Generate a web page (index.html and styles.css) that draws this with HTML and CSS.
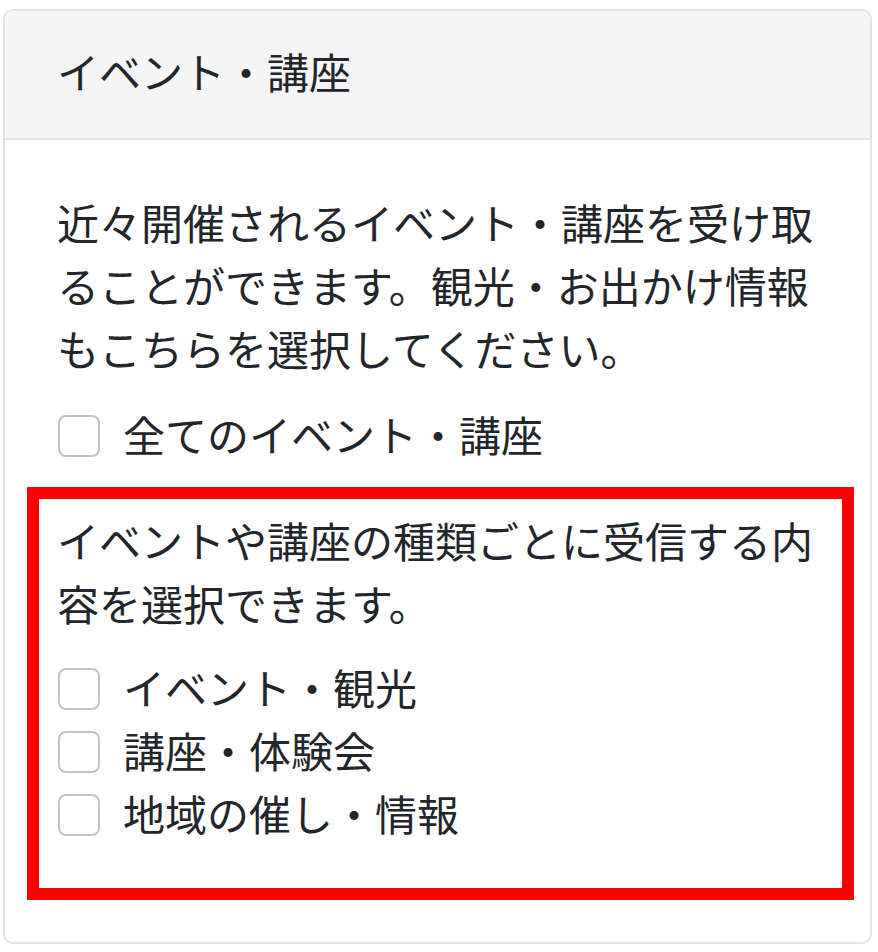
FILE: index.html
```html
<!DOCTYPE html>
<html lang="ja">
<head>
<meta charset="utf-8">
<title>イベント・講座</title>
<link rel="stylesheet" href="styles.css">
</head>
<body>
<div class="card">
  <div class="card-header">イベント・講座</div>
  <div class="card-body">
    <div class="intro">
      <p class="text">近々開催されるイベント・講座を受け取ることができます。観光・お出かけ情報もこちらを選択してください。</p>
      <label class="check-row"><span class="box"></span><span class="label">全てのイベント・講座</span></label>
    </div>
    <div class="highlight">
      <p class="text">イベントや講座の種類ごとに受信する内容を選択できます。</p>
      <div class="check-list">
        <label class="check-row"><span class="box"></span><span class="label">イベント・観光</span></label>
        <label class="check-row"><span class="box"></span><span class="label">講座・体験会</span></label>
        <label class="check-row"><span class="box"></span><span class="label">地域の催し・情報</span></label>
      </div>
    </div>
  </div>
</div>
</body>
</html>
```

FILE: styles.css
```css
* { box-sizing: border-box; }
html, body { margin: 0; padding: 0; background: #fff; }
body {
  font-family: "Noto Sans CJK JP", "Noto Sans", sans-serif;
  font-size: 42px;
  line-height: 63px;
  color: #222529;
}
.card {
  margin: 9px 0 0 3px;
  width: 869px;
  height: 935px;
  border: 2px solid #e3e3e3;
  border-radius: 10px;
  overflow: hidden;
  background: #fff;
}
.card-header {
  height: 129px;
  background: #f5f5f5;
  border-bottom: 2px solid #e3e3e3;
  padding-left: 52px;
  padding-bottom: 8px;
  display: flex;
  align-items: center;
}
.card-body {
  padding: 50px 16px 0 22px;
}
.intro {
  padding-left: 30px;
  padding-right: 30px;
}
.text {
  margin: 0;
  width: 775px;
}
.check-row {
  display: flex;
  align-items: center;
  height: 63px;
}
.intro .check-row { margin-top: 25px; }
.box {
  flex: none;
  width: 42px;
  height: 42px;
  margin-left: 1px;
  margin-right: 23px;
  border: 2.5px solid #bcc3cb;
  border-radius: 8px;
  background: #fff;
}
.label {
  padding-bottom: 5px;
}
.highlight {
  margin-top: 20px;
  border: 12px solid #ff0000;
  padding: 9px 0 42px 18px;
}
.check-list {
  margin-top: 23px;
}
```
